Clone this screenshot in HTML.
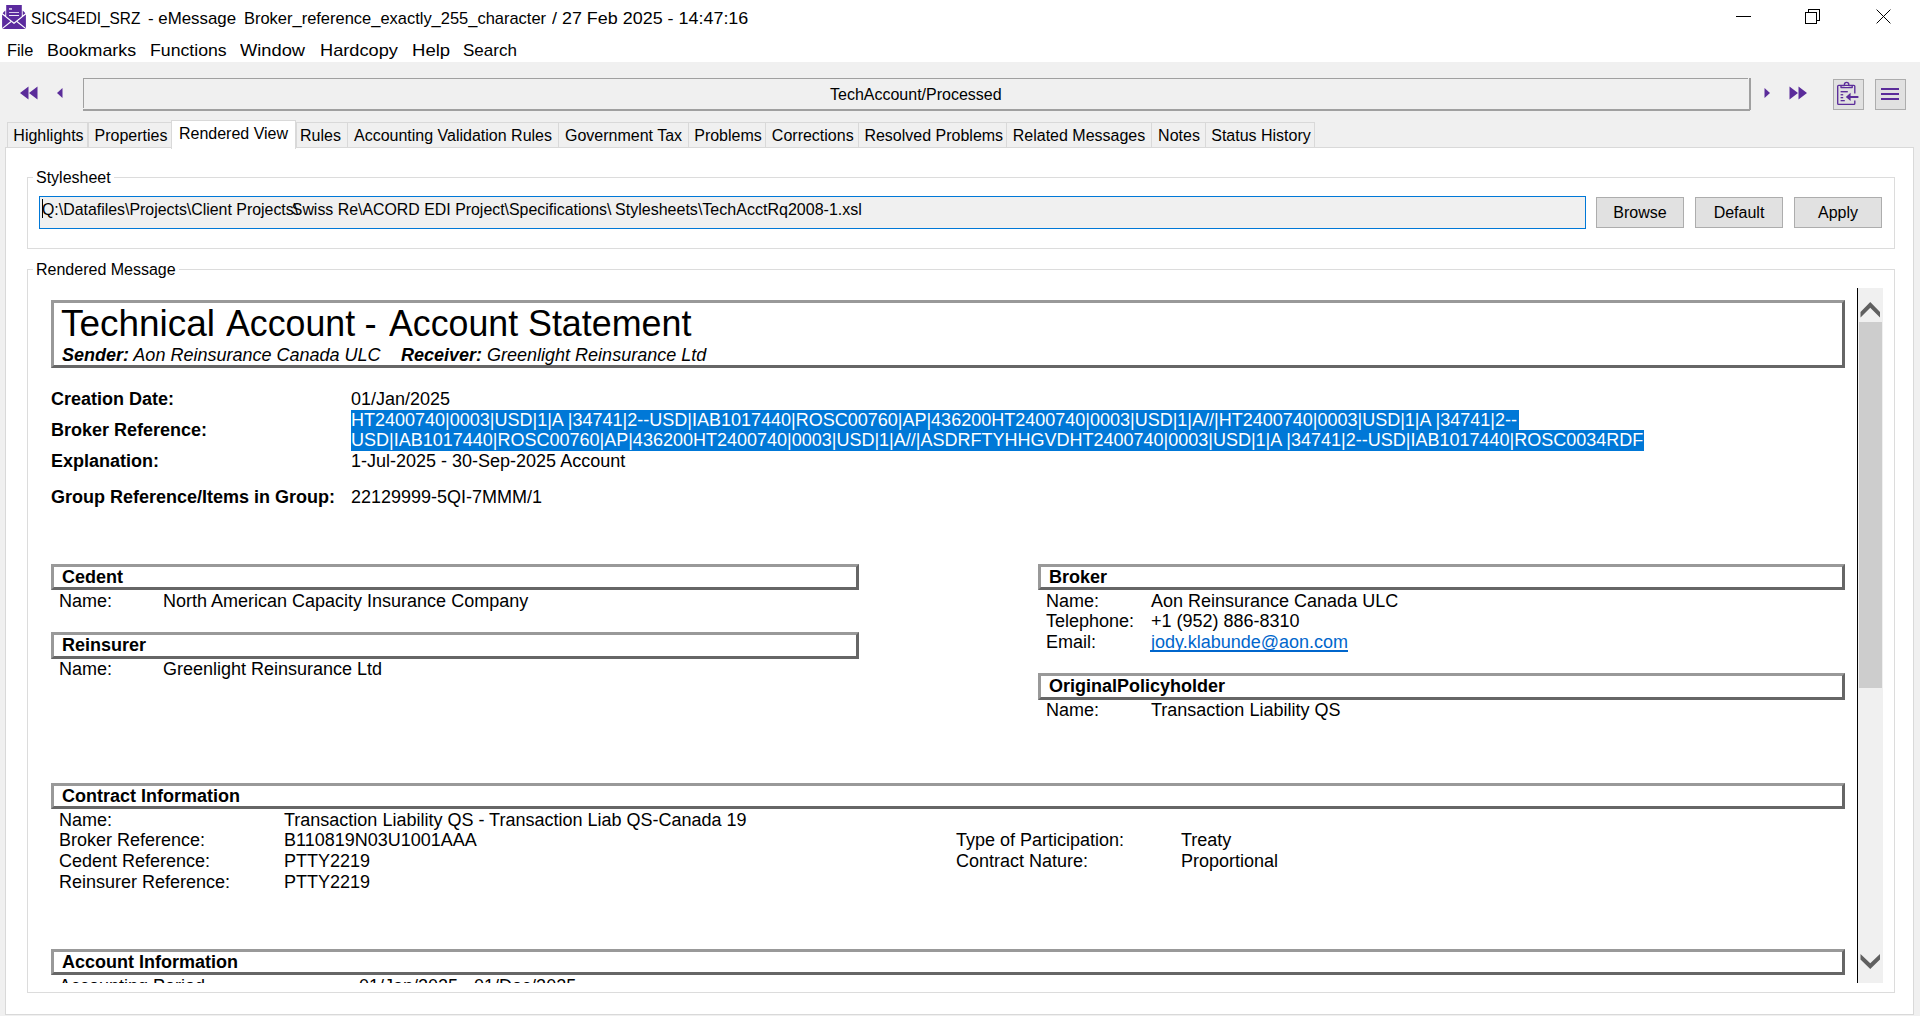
<!DOCTYPE html>
<html><head><meta charset="utf-8"><title>SICS4EDI_SRZ</title>
<style>
*{margin:0;padding:0;box-sizing:border-box}
html,body{width:1920px;height:1016px;overflow:hidden;background:#f0f0f0;font-family:"Liberation Sans",sans-serif;color:#000;position:relative}
.a{position:absolute;white-space:nowrap;line-height:1}
.box{position:absolute}
.tab{position:absolute;top:122px;height:25px;background:#f0f0f0;border:1px solid #d9d9d9;border-bottom:none;font-size:16px;line-height:1}
.tab span{position:absolute;top:5px;left:0;right:0;text-align:center}
.btn{position:absolute;background:#e1e1e1;border:1px solid #adadad;font-size:16px;line-height:1}
.btn span{position:absolute;left:0;right:0;text-align:center;top:7px}
.hb{position:absolute;border-style:solid;border-width:3px;border-color:#999 #666 #666 #999;background:#fff}
.hb b{position:absolute;left:8px;top:1px;font-size:18px;line-height:1}
</style></head><body>
<!-- title + menu -->
<div class="box" style="left:0;top:0;width:1920px;height:62px;background:#fff"></div>
<svg class="box" style="left:0;top:0" width="30" height="32" viewBox="0 0 30 32">
<path d="M2.6 13.3 L5.3 10.6 L5.3 15.5 Z M25.4 13.3 L22.7 10.6 L22.7 15.5 Z" fill="#5b2a9e"/>
<path d="M6.2 5 H21.8 V17.3 L14 23.6 L6.2 17.3 Z" fill="#5b2a9e"/>
<path d="M2.1 14.1 L14 23.6 L25.9 14.1 V28.9 H2.1 Z" fill="#5b2a9e"/>
<path d="M2.2 13.9 L14 23.3 L25.8 13.9" fill="none" stroke="#fff" stroke-width="1.1"/>
<path d="M2.2 28.6 L11.1 21.5 M25.8 28.6 L16.9 21.5" fill="none" stroke="#fff" stroke-width="1.1"/>
<rect x="9" y="8.1" width="3" height="1.7" fill="#fff" opacity=".75"/>
<rect x="9" y="12.1" width="10" height="0.9" fill="#fff" opacity=".85"/>
<rect x="9" y="15.1" width="10" height="0.9" fill="#fff"/>
</svg>
<div class="a" style="left:31px;top:10px;font-size:17px;transform:scaleX(0.904);transform-origin:0 0">SICS4EDI_SRZ</div>
<div class="a" style="left:148px;top:10px;font-size:17px;transform:scaleX(0.992);transform-origin:0 0">- eMessage</div>
<div class="a" style="left:244px;top:10px;font-size:17px;transform:scaleX(0.9686);transform-origin:0 0">Broker_reference_exactly_255_character</div>
<div class="a" style="left:552px;top:10px;font-size:17px;transform:scaleX(1.0543);transform-origin:0 0">/ 27 Feb 2025 - 14:47:16</div>
<!-- window controls -->
<div class="box" style="left:1736px;top:16px;width:15px;height:1px;background:#000"></div>
<div class="box" style="left:1808px;top:9px;width:12px;height:12px;border:1px solid #000"></div>
<div class="box" style="left:1805px;top:12px;width:12px;height:12px;border:1px solid #000;background:#fff"></div>
<svg class="box" style="left:1876px;top:9px" width="15" height="15" viewBox="0 0 15 15"><path d="M0.6 0.6 L14.4 14.4 M14.4 0.6 L0.6 14.4" stroke="#000" stroke-width="1"/></svg>
<div class="a" style="left:7px;top:42px;font-size:17px;transform:scaleX(0.96);transform-origin:0 0">File</div>
<div class="a" style="left:46.5px;top:42px;font-size:17px;transform:scaleX(1.048);transform-origin:0 0">Bookmarks</div>
<div class="a" style="left:149.5px;top:42px;font-size:17px;transform:scaleX(1.04);transform-origin:0 0">Functions</div>
<div class="a" style="left:240px;top:42px;font-size:17px;transform:scaleX(1.075);transform-origin:0 0">Window</div>
<div class="a" style="left:320px;top:42px;font-size:17px;transform:scaleX(1.07);transform-origin:0 0">Hardcopy</div>
<div class="a" style="left:411.5px;top:42px;font-size:17px;transform:scaleX(1.09);transform-origin:0 0">Help</div>
<div class="a" style="left:463px;top:42px;font-size:17px">Search</div>

<!-- nav bar -->
<svg class="box" style="left:19px;top:86px" width="20" height="14" viewBox="0 0 20 14"><path d="M1 7 L9.5 0.5 L9.5 13.5 Z M10 7 L18.5 0.5 L18.5 13.5 Z" fill="#5b2c9a"/></svg>
<svg class="box" style="left:56px;top:87px" width="8" height="12" viewBox="0 0 8 12"><path d="M1 6 L6.5 1 L6.5 11 Z" fill="#5b2c9a"/></svg>
<div class="box" style="left:83px;top:78px;width:1665px;height:1px;background:#a0a0a0"></div>
<div class="box" style="left:83px;top:78px;width:1px;height:30px;background:#a0a0a0"></div>
<div class="box" style="left:83px;top:109px;width:1667px;height:2px;background:#a0a0a0"></div>
<div class="box" style="left:1749px;top:78px;width:2px;height:32px;background:#a0a0a0"></div>
<div class="a" style="left:830px;top:87px;font-size:16px">TechAccount/Processed</div>
<svg class="box" style="left:1763px;top:87px" width="8" height="12" viewBox="0 0 8 12"><path d="M7 6 L1.5 1 L1.5 11 Z" fill="#5b2c9a"/></svg>
<svg class="box" style="left:1788px;top:86px" width="20" height="14" viewBox="0 0 20 14"><path d="M19 7 L10.5 0.5 L10.5 13.5 Z M10 7 L1.5 0.5 L1.5 13.5 Z" fill="#5b2c9a"/></svg>
<div class="btn" style="left:1833px;top:79px;width:31px;height:31px"></div>
<svg class="box" style="left:1836px;top:81px" width="25" height="25" viewBox="0 0 25 25">
<g fill="none" stroke="#5b2c9a" stroke-width="1.35" stroke-linejoin="round">
<path d="M18.8 12.6 V5.3 a0.9 0.9 0 0 0 -0.9 -0.9 H2.6 a0.9 0.9 0 0 0 -0.9 0.9 V22.4 a0.9 0.9 0 0 0 0.9 0.9 H17.9 a0.9 0.9 0 0 0 0.9 -0.9 V19.4"/>
<path d="M5 6.6 V4.6 H8.4 V3.6 a2.2 2.2 0 0 1 4.4 0 V4.6 H16.2 V6.6 Z"/>
</g>
<rect x="4.6" y="10" width="7.2" height="1.4" fill="#5b2c9a"/>
<rect x="4.6" y="13.1" width="2.6" height="1.3" fill="#5b2c9a"/>
<rect x="4.6" y="16" width="2.6" height="1.3" fill="#5b2c9a"/>
<rect x="4.6" y="19" width="4.2" height="1.3" fill="#5b2c9a"/>
<path d="M9.8 16 L14.6 11.8 L14.6 15 L22.4 15 L22.4 17 L14.6 17 L14.6 20 Z" fill="#5b2c9a"/>
</svg>
<div class="btn" style="left:1875px;top:79px;width:31px;height:31px"></div>
<div class="box" style="left:1881px;top:88px;width:18px;height:2px;background:#5b2c9a"></div>
<div class="box" style="left:1881px;top:93px;width:18px;height:2px;background:#5b2c9a"></div>
<div class="box" style="left:1881px;top:98px;width:18px;height:2px;background:#5b2c9a"></div>

<!-- tab panel -->
<div class="box" style="left:5px;top:147px;width:1909px;height:868px;background:#fff;border:1px solid #d9d9d9"></div>
<div class="tab" style="left:7px;width:81px"><span style="transform:translateX(1px)">Highlights</span></div>
<div class="tab" style="left:88px;width:84px"><span style="transform:translateX(1px)">Properties</span></div>
<div class="tab" style="left:171px;top:120px;height:29px;width:125px;background:#fff;border-color:#d9d9d9"><span style="top:5px">Rendered View</span></div>
<div class="tab" style="left:296px;width:52px"><span style="transform:translateX(-1.5px)">Rules</span></div>
<div class="tab" style="left:347px;width:212px"><span>Accounting Validation Rules</span></div>
<div class="tab" style="left:558px;width:131px"><span>Government Tax</span></div>
<div class="tab" style="left:688px;width:78px"><span style="transform:translateX(1px)">Problems</span></div>
<div class="tab" style="left:765px;width:94px"><span style="transform:translateX(0.75px)">Corrections</span></div>
<div class="tab" style="left:858px;width:149px"><span style="transform:translateX(1.25px)">Resolved Problems</span></div>
<div class="tab" style="left:1006px;width:146px"><span>Related Messages</span></div>
<div class="tab" style="left:1151px;width:56px"><span>Notes</span></div>
<div class="tab" style="left:1205px;width:110px"><span style="transform:translateX(1px)">Status History</span></div>

<!-- stylesheet group -->
<div class="box" style="left:27px;top:177px;width:1868px;height:72px;border:1px solid #dcdcdc"></div>
<div class="a" style="left:33px;top:170px;padding:0 3px;background:#fff;font-size:16px">Stylesheet</div>
<div class="box" style="left:39px;top:196px;width:1547px;height:33px;background:#f0f0f0;border:1px solid #0078d7"></div>
<div class="a" style="left:42px;top:202px;font-size:15.9px">Q:\Datafiles\Projects\Client Projects\</div>
<div class="a" style="left:291.8px;top:202px;font-size:15.9px">Swiss Re\ACORD EDI Project\Specifications\</div>
<div class="a" style="left:615.2px;top:202px;font-size:15.9px;transform:scaleX(1.009);transform-origin:0 0">Stylesheets\TechAcctRq2008-1.xsl</div>
<div class="box" style="left:42px;top:199px;width:1px;height:19px;background:#000"></div>
<div class="btn" style="left:1596px;top:197px;width:88px;height:31px"><span>Browse</span></div>
<div class="btn" style="left:1695px;top:197px;width:88px;height:31px"><span>Default</span></div>
<div class="btn" style="left:1794px;top:197px;width:88px;height:31px"><span>Apply</span></div>

<!-- rendered message group -->
<div class="box" style="left:27px;top:269px;width:1868px;height:724px;border:1px solid #dcdcdc"></div>
<div class="a" style="left:33px;top:262px;padding:0 3px;background:#fff;font-size:16px">Rendered Message</div>

<!-- BROWSER -->
<div class="box" style="left:1857px;top:288px;width:1px;height:695px;background:#000"></div>
<div class="box" style="left:1858px;top:288px;width:25px;height:695px;background:#f0f0f0"></div>
<div class="box" style="left:1859px;top:322px;width:23px;height:366px;background:#cdcdcd"></div>
<svg class="box" style="left:1860px;top:301px" width="21" height="17" viewBox="0 0 21 17"><path d="M0.5 10.9 L10.25 1 L20 10.9 L20 16.5 L10.25 6.7 L0.5 16.5 Z" fill="#606060"/></svg>
<svg class="box" style="left:1860px;top:953px" width="21" height="17" viewBox="0 0 21 17"><path d="M0.5 0.9 L10.25 10.2 L20 0.9 L20 6.5 L10.25 15.9 L0.5 6.5 Z" fill="#606060"/></svg>
<div id="doc" class="box" style="left:43px;top:288px;width:1814px;height:695px;overflow:hidden;background:#fff">
<div style="position:absolute;left:-43px;top:-288px;width:1920px;height:1300px;font-size:18px">
<div class="hb" style="left:51px;top:300px;width:1794px;height:68px"></div>
<div class="a" style="left:61.2px;top:306px;font-size:36.5px;transform:scaleX(1.0125);transform-origin:0 0">Technical</div>
<div class="a" style="left:226.3px;top:306px;font-size:36.5px;transform:scaleX(0.979);transform-origin:0 0">Account</div>
<div class="a" style="left:364.6px;top:306px;font-size:36.5px">-</div>
<div class="a" style="left:388.6px;top:306px;font-size:36.5px;transform:scaleX(0.979);transform-origin:0 0">Account</div>
<div class="a" style="left:528.3px;top:306px;font-size:36.5px;transform:scaleX(0.982);transform-origin:0 0">Statement</div>
<div class="a" style="left:62px;top:346px;font-style:italic"><b>Sender:</b> Aon Reinsurance Canada ULC</div>
<div class="a" style="left:401px;top:346px;font-style:italic"><b>Receiver:</b> Greenlight Reinsurance Ltd</div>

<div class="a" style="left:51px;top:390px;font-weight:bold">Creation Date:</div>
<div class="a" style="left:351px;top:390px">01/Jan/2025</div>
<div class="a" style="left:51px;top:421px;font-weight:bold">Broker Reference:</div>
<div class="box" style="left:351px;top:410px;width:1168px;height:20px;background:#0078d7"></div>
<div class="box" style="left:351px;top:430px;width:1293px;height:21px;background:#0078d7"></div>
<div class="a" style="left:351px;top:411px;color:#fff">HT2400740|0003|USD|1|A |34741|2--USD|IAB1017440|ROSC00760|AP|436200HT2400740|0003|USD|1|A//|HT2400740|0003|USD|1|A |34741|2--</div>
<div class="a" style="left:351px;top:431px;color:#fff">USD|IAB1017440|ROSC00760|AP|436200HT2400740|0003|USD|1|A//|ASDRFTYHHGVDHT2400740|0003|USD|1|A |34741|2--USD|IAB1017440|ROSC0034RDF</div>
<div class="a" style="left:51px;top:452px;font-weight:bold">Explanation:</div>
<div class="a" style="left:351px;top:452px">1-Jul-2025 - 30-Sep-2025 Account</div>
<div class="a" style="left:51px;top:488px;font-weight:bold">Group Reference/Items in Group:</div>
<div class="a" style="left:351px;top:488px">22129999-5QI-7MMM/1</div>

<div class="hb" style="left:51px;top:564px;width:808px;height:26px"><b>Cedent</b></div>
<div class="a" style="left:59px;top:592px">Name:</div>
<div class="a" style="left:163px;top:592px">North American Capacity Insurance Company</div>
<div class="hb" style="left:51px;top:632px;width:808px;height:27px"><b>Reinsurer</b></div>
<div class="a" style="left:59px;top:660px">Name:</div>
<div class="a" style="left:163px;top:660px">Greenlight Reinsurance Ltd</div>

<div class="hb" style="left:1038px;top:564px;width:807px;height:26px"><b>Broker</b></div>
<div class="a" style="left:1046px;top:592px">Name:</div>
<div class="a" style="left:1151px;top:592px">Aon Reinsurance Canada ULC</div>
<div class="a" style="left:1046px;top:612px">Telephone:</div>
<div class="a" style="left:1151px;top:612px">+1 (952) 886-8310</div>
<div class="a" style="left:1046px;top:633px">Email:</div>
<div class="a" style="left:1151px;top:633px;color:#0066cc">jody.klabunde@aon.com</div>
<div class="box" style="left:1150px;top:650px;width:198px;height:2px;background:#0066cc"></div>
<div class="hb" style="left:1038px;top:673px;width:807px;height:27px"><b>OriginalPolicyholder</b></div>
<div class="a" style="left:1046px;top:701px">Name:</div>
<div class="a" style="left:1151px;top:701px">Transaction Liability QS</div>

<div class="hb" style="left:51px;top:783px;width:1794px;height:26px"><b>Contract Information</b></div>
<div class="a" style="left:59px;top:811px">Name:</div>
<div class="a" style="left:284px;top:811px">Transaction Liability QS - Transaction Liab QS-Canada 19</div>
<div class="a" style="left:59px;top:831px">Broker Reference:</div>
<div class="a" style="left:284px;top:831px">B110819N03U1001AAA</div>
<div class="a" style="left:59px;top:852px">Cedent Reference:</div>
<div class="a" style="left:284px;top:852px">PTTY2219</div>
<div class="a" style="left:59px;top:873px">Reinsurer Reference:</div>
<div class="a" style="left:284px;top:873px">PTTY2219</div>
<div class="a" style="left:956px;top:831px">Type of Participation:</div>
<div class="a" style="left:1181px;top:831px">Treaty</div>
<div class="a" style="left:956px;top:852px">Contract Nature:</div>
<div class="a" style="left:1181px;top:852px">Proportional</div>

<div class="hb" style="left:51px;top:949px;width:1794px;height:26px"><b>Account Information</b></div>
<div class="a" style="left:59px;top:977px">Accounting Period</div>
<div class="a" style="left:359px;top:977px">01/Jan/2025 - 01/Dec/2025</div>
</div>
</div>
</body></html>
